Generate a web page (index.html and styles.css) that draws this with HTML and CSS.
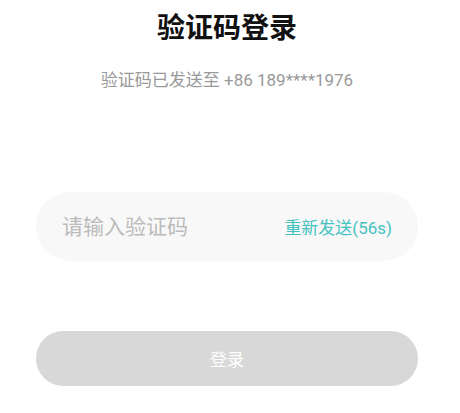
FILE: index.html
```html
<!DOCTYPE html>
<html lang="zh-CN">
<head>
    <meta charset="UTF-8">
    <meta name="viewport" content="width=device-width, initial-scale=1.0">
    <title>验证码登录</title>
    <link rel="stylesheet" href="styles.css">
</head>
<body>
    <div class="page">
        <h1 class="title">验证码登录</h1>
        <p class="subtitle">验证码已发送至 +86 189****1976</p>

        <!-- 验证码输入 -->
        <div class="code-box">
            <input type="text" class="code-input" placeholder="请输入验证码">
            <span class="resend">重新发送(56s)</span>
        </div>

        <button class="login-btn" disabled>登录</button>
    </div>
</body>
</html>
```

FILE: styles.css
```css
body {
    margin: 0;
    background: #fff;
    font-family: Roboto, "Noto Sans CJK SC", sans-serif;
}
.page {
    display: flex;
    flex-direction: column;
    padding: 9px 42px 0 36px;
}
.title {
    margin: 0;
    font-size: 28px;
    line-height: 40px;
    font-weight: bold;
    color: #111;
    text-align: center;
}
.subtitle {
    margin: 19px 0 0;
    font-size: 17px;
    line-height: 24px;
    color: #999;
    text-align: center;
}
.code-box {
    display: flex;
    align-items: center;
    height: 69px;
    margin-top: 100px;
    padding: 0 26px;
    background: #f8f8f8;
    border-radius: 35px;
}
.code-input {
    flex: 1;
    min-width: 0;
    border: none;
    outline: none;
    background: transparent;
    padding: 0;
    font-family: inherit;
    font-size: 21px;
    color: #333;
}
.code-input::placeholder {
    color: #bbb;
}
.resend {
    font-size: 17px;
    color: #45c2c0;
}
.login-btn {
    height: 55px;
    margin-top: 70px;
    border: none;
    border-radius: 28px;
    background: #d8d8d8;
    color: #fff;
    font-family: inherit;
    font-size: 17px;
}
```
